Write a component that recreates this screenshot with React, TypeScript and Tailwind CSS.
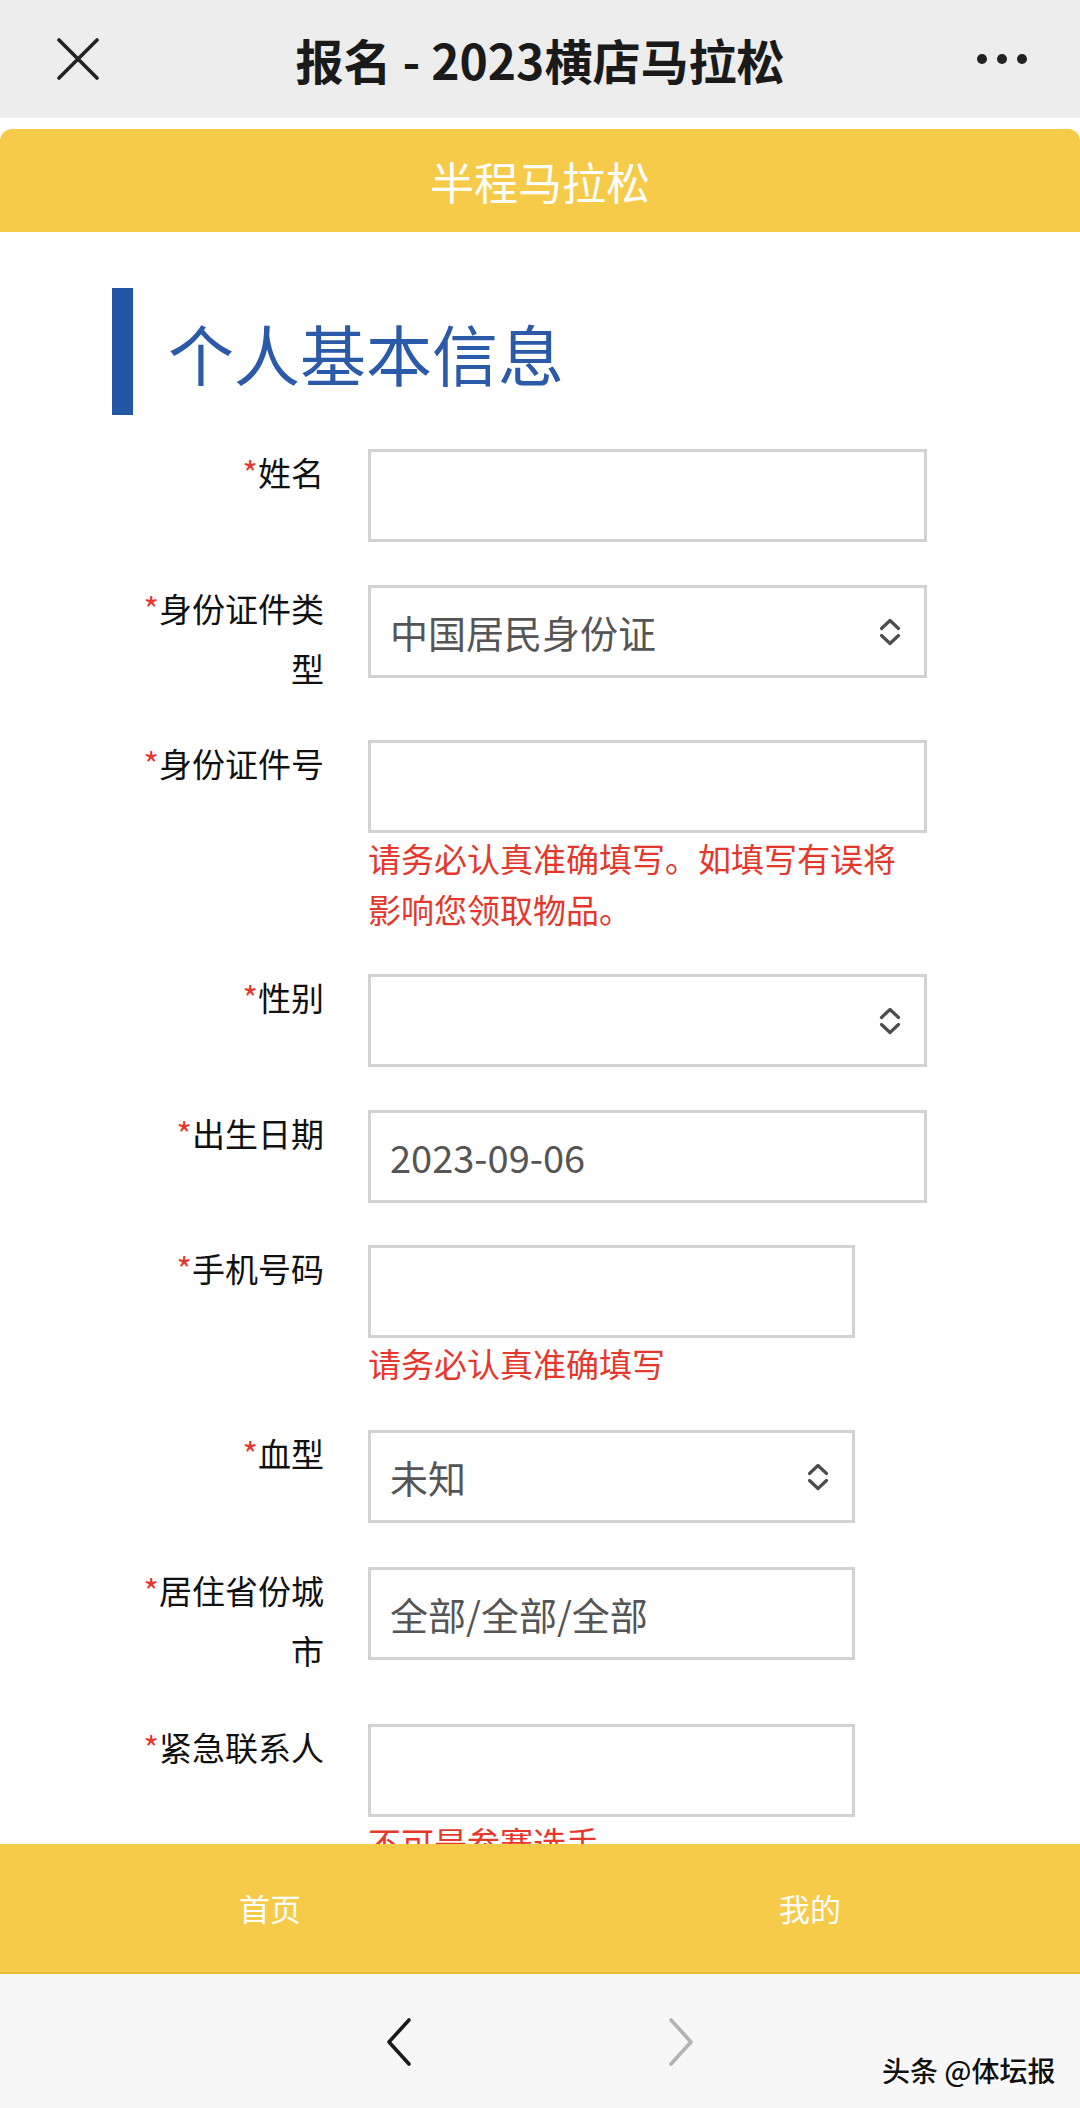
import React from "react";

const FONT = { fontFamily: '"Noto Sans CJK SC", "Noto Sans", sans-serif' };

function UpDown() {
  return (
    <svg width="24" height="28" viewBox="0 0 24 28" fill="none" className="shrink-0">
      <path d="M3.5 10.5 L12 2.5 L20.5 10.5" stroke="#4d4d4d" strokeWidth="3.2" strokeLinecap="round" strokeLinejoin="round" />
      <path d="M3.5 17.5 L12 25.5 L20.5 17.5" stroke="#4d4d4d" strokeWidth="3.2" strokeLinecap="round" strokeLinejoin="round" />
    </svg>
  );
}

type RowProps = {
  mt: string;
  label: string;
  narrow?: boolean;
  value?: string;
  select?: boolean;
  helper?: string;
};

function Row({ mt, label, narrow, value, select, helper }: RowProps) {
  return (
    <div className={`flex items-start ${mt}`}>
      <div className="ml-[129px] w-[195px] shrink-0 text-right text-[33px] leading-[60px] text-[#111]">
        <span className="text-[#e5382c]">*</span>
        {label}
      </div>
      <div className={`ml-[44px] shrink-0 ${narrow ? "w-[487px]" : "w-[559px]"}`}>
        <div className="mt-[7px] flex h-[93px] items-center justify-between border-[3px] border-[#d2d2d2] bg-white pl-[19px] pr-[22px]">
          <span className="text-[38px] leading-none text-[#555]">{value ?? ""}</span>
          {select ? <UpDown /> : null}
        </div>
        {helper ? (
          <div className="text-[33px] leading-[51px] text-[#e5382c]">{helper}</div>
        ) : null}
      </div>
    </div>
  );
}

export default function App() {
  return (
    <div className="flex h-[2108px] w-[1080px] flex-col overflow-hidden bg-white" style={FONT}>
      {/* Top bar */}
      <div className="grid h-[118px] shrink-0 grid-cols-[1fr_auto_1fr] items-center bg-[#ededed]">
        <div className="pl-[57px]">
          <svg width="42" height="42" viewBox="0 0 42 42" fill="none">
            <path d="M2 2 L40 40 M40 2 L2 40" stroke="#222" strokeWidth="3.6" strokeLinecap="round" />
          </svg>
        </div>
        <div className="text-[48px] font-bold leading-none text-[#1a1a1a]">报名 - 2023横店马拉松</div>
        <div className="flex justify-end gap-[10px] pr-[53px]">
          <span className="h-[10px] w-[10px] rounded-full bg-[#222]" />
          <span className="h-[10px] w-[10px] rounded-full bg-[#222]" />
          <span className="h-[10px] w-[10px] rounded-full bg-[#222]" />
        </div>
      </div>

      {/* Scrollable content */}
      <div className="flex-1 overflow-hidden bg-white">
        <div className="mt-[11px] flex h-[103px] items-center justify-center rounded-t-[12px] bg-[#f7cb4a] text-[44px] leading-none text-white">
          半程马拉松
        </div>

        <div className="ml-[112px] mt-[56px] flex h-[127px] items-center">
          <div className="h-full w-[21px] bg-[#2456a6]" />
          <div className="ml-[35px] text-[66px] leading-none text-[#2a5aa8]">个人基本信息</div>
        </div>

        <Row mt="mt-[27px]" label="姓名" />
        <Row mt="mt-[36px]" label="身份证件类型" value="中国居民身份证" select />
        <Row mt="mt-[35px]" label="身份证件号" helper="请务必认真准确填写。如填写有误将影响您领取物品。" />
        <Row mt="mt-[32px]" label="性别" select />
        <Row mt="mt-[36px]" label="出生日期" value="2023-09-06" />
        <Row mt="mt-[35px]" label="手机号码" narrow helper="请务必认真准确填写" />
        <Row mt="mt-[34px]" label="血型" narrow value="未知" select />
        <Row mt="mt-[37px]" label="居住省份城市" narrow value="全部/全部/全部" />
        <Row mt="mt-[37px]" label="紧急联系人" narrow helper="不可是参赛选手" />
      </div>

      {/* Bottom nav */}
      <div className="grid h-[130px] shrink-0 grid-cols-2 border-b-2 border-[#eab83a] bg-[#f7cb4a] text-[31px] text-white">
        <div className="flex items-center justify-center">首页</div>
        <div className="flex items-center justify-center">我的</div>
      </div>

      {/* Browser bar */}
      <div className="relative flex h-[134px] shrink-0 items-start justify-center gap-[256px] bg-[#f7f7f7] pt-[44px]">
        <svg width="26" height="48" viewBox="0 0 26 48" fill="none">
          <path d="M23 2 L3 24 L23 46" stroke="#1b1b1b" strokeWidth="3.6" strokeLinecap="round" strokeLinejoin="round" />
        </svg>
        <svg width="26" height="48" viewBox="0 0 26 48" fill="none">
          <path d="M3 2 L23 24 L3 46" stroke="#b3b3b3" strokeWidth="3.6" strokeLinecap="round" strokeLinejoin="round" />
        </svg>
        <div
          className="absolute left-[882px] top-[82px] text-[28px] font-medium leading-none text-[#111]"
          style={{ textShadow: "1px 1px 0 #fff, -1px -1px 0 #fff, 1px -1px 0 #fff, -1px 1px 0 #fff" }}
        >
          头条 @体坛报
        </div>
      </div>
    </div>
  );
}
